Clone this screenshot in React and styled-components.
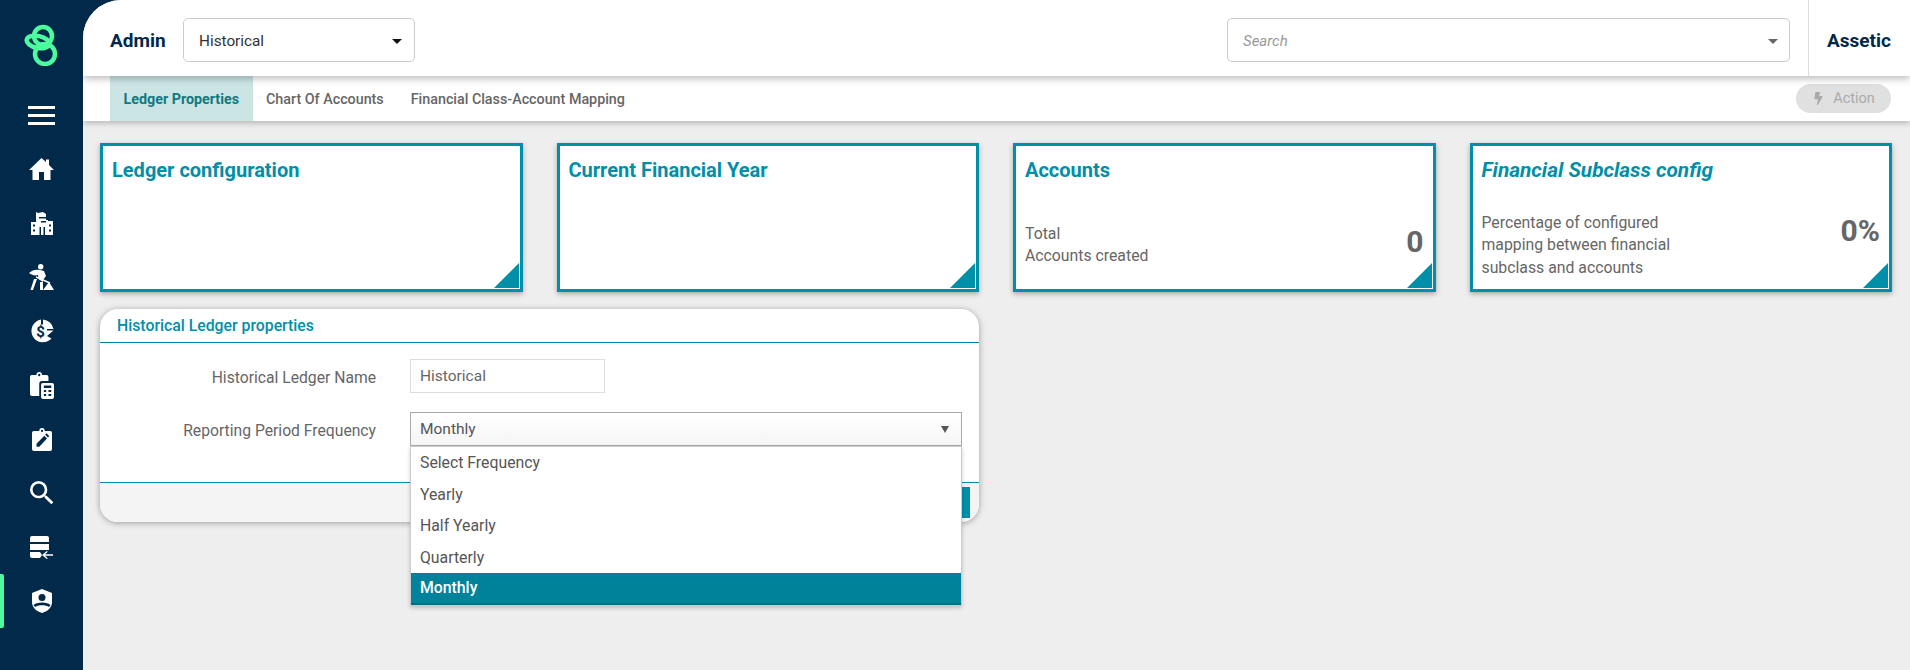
import React from "react";
import styled, { createGlobalStyle } from "styled-components";
import { FaBolt } from "react-icons/fa";
import { MdSearch } from "react-icons/md";

const navy = "#012a4a";
const teal = "#008fa8";

const GlobalStyle = createGlobalStyle`
  html, body { margin: 0; padding: 0; height: 100%; overflow: hidden; }
  body { font-family: Roboto, "Liberation Sans", sans-serif; background: ${navy}; }
  * { box-sizing: border-box; }
`;

const Logo = () => (
  <svg width="36" height="42" viewBox="0 0 36 42" fill="none" stroke="#4dfc9f" strokeWidth="4.500">
    <circle cx="19" cy="12" r="9" />
    <circle cx="21" cy="30" r="10" />
    <ellipse cx="14" cy="18" rx="11.500" ry="6" transform="rotate(12 14 18)" />
  </svg>
);

const HomeIcon = () => (
  <svg width="25" height="22" viewBox="0 0 25 22" fill="#fff">
    <path d="M12.500 0L17 4V1.500h3V7l5 5h-3.500v10H15v-8h-5v8H3.500V12H0z" />
  </svg>
);

const BuildingIcon = () => (
  <svg width="22" height="23" viewBox="0 0 22 23" fill="#fff">
    <path fillRule="evenodd" d="M0 23V10h5V0l2 1 5-1 3 2v6h2v1h5v14H0zM2 12.500v2h2v-2H2zm0 5v2h2v-2H2zm16-5v2h2v-2h-2zm0 5v2h2v-2h-2zM8 5v1.500h7V5H8zm2 4v1.500h5V9h-5zM8.500 15v8H10v-8H8.500zm4 0v8H14v-8h-1.500z" />
  </svg>
);

const DiggingIcon = () => (
  <svg width="25" height="26" viewBox="0 0 25 26" fill="#fff">
    <circle cx="11.700" cy="2.800" r="2.700" />
    <path d="M0 9c3-3 7-4 11-3l4 1 2 5-3 4v2l-4.500-3-.5-4c-3 1-6 0-9-2z" />
    <path d="M5 15h3L4 26H1.500zM11 18h3v8h-3z" />
    <path d="M7 13l14 6" stroke="#fff" strokeWidth="1.500" />
    <path d="M14 26l6-8 5 8z" />
  </svg>
);

const DollarIcon = () => (
  <svg width="24" height="24" viewBox="0 0 24 24">
    <path fill="#fff" d="M11 0.500v5h2v-5a11.500 11.500 0 0 1 10.500 9.500H17v1.500h6.500L17 17l4.500 2.500A11.500 11.500 0 1 1 11 0.500z" />
    <text x="10.500" y="18" textAnchor="middle" fontFamily="Roboto, sans-serif" fontWeight="700" fontSize="15" fill={navy}>$</text>
  </svg>
);

const ClipCalcIcon = () => (
  <svg width="24" height="27" viewBox="0 0 26 27" preserveAspectRatio="none" fill="#fff">
    <path d="M2 3h5a3 3 0 0 1 6 0h5a2 2 0 0 1 2 2v4h-7a3 3 0 0 0-3 3v12H2a2 2 0 0 1-2-2V5a2 2 0 0 1 2-2z" />
    <circle cx="10" cy="3" r="1.200" fill={navy} />
    <path fillRule="evenodd" d="M14 11h10a2 2 0 0 1 2 2v12a2 2 0 0 1-2 2H14a2 2 0 0 1-2-2V13a2 2 0 0 1 2-2zm1 2.500V16h8v-2.500h-8zm0 4.500v2h2.500v-2H15zm5 0v2h3v-2h-3zm-5 4v2h2.500v-2H15zm5 0v2h3v-2h-3z" />
  </svg>
);

const ClipPenIcon = () => (
  <svg width="20" height="23" viewBox="0 0 22 24" preserveAspectRatio="none" fill="#fff">
    <path d="M2 3h6a3 3 0 0 1 6 0h6a2 2 0 0 1 2 2v17a2 2 0 0 1-2 2H2a2 2 0 0 1-2-2V5a2 2 0 0 1 2-2z" />
    <circle cx="11" cy="3" r="1.200" fill={navy} />
    <path fill={navy} d="M5 19.500v-3L13.500 8l3 3L8 19.500H5zM14.500 7l1.500-1.500 3 3L17.500 10l-3-3z" />
  </svg>
);

const ServerIcon = () => (
  <svg width="23" height="23" viewBox="0 0 23 23" fill="#fff">
    <path d="M2 0h15a2 2 0 0 1 2 2v4H0V2a2 2 0 0 1 2-2zM0 8h19v6H0zM0 16h10l2 3-2 3H2a2 2 0 0 1-2-2z" />
    <path d="M23 18.300v1.400h-8L17.800 22.300l-1 .700-4.800-4 4.800-4 1 .700L15 18.300z" />
  </svg>
);

const ShieldIcon = () => (
  <svg width="20" height="24" viewBox="0 0 20 24" fill="#fff">
    <path d="M10 0l10 4v9c0 6-5 9.500-10 11C5 22.500 0 19 0 13V4z" />
    <circle cx="10" cy="8.500" r="3.500" fill={navy} />
    <path fill={navy} d="M1.500 16C4 12.500 16 12.500 18.500 16L17 18c-3-2.500-11-2.500-14 0z" />
  </svg>
);

function Burger() {
  return <BurgerBars><i /><i /><i /></BurgerBars>;
}

const navIcons = [
  <Burger key="menu" />,
  <HomeIcon key="home" />,
  <BuildingIcon key="building" />,
  <DiggingIcon key="dig" />,
  <DollarIcon key="dollar" />,
  <ClipCalcIcon key="calc" />,
  <ClipPenIcon key="pen" />,
  <MdSearch key="search" size={32} />,
  <ServerIcon key="server" />,
  <ShieldIcon key="shield" />,
];

const summaries = [
  { title: "Ledger configuration" },
  { title: "Current Financial Year" },
  { title: "Accounts", lines: ["Total", "Accounts created"], value: "0" },
  {
    title: "Financial Subclass config",
    italic: true,
    lines: ["Percentage of configured", "mapping between financial", "subclass and accounts"],
    value: "0%",
  },
];

const frequencies = ["Select Frequency", "Yearly", "Half Yearly", "Quarterly", "Monthly"];

export default function App() {
  return (
    <Page>
      <GlobalStyle />
      <Sidebar>
        <LogoBox><Logo /></LogoBox>
        {navIcons.map((icon, i) => (
          <NavItem key={i} $active={i === 9}>{icon}</NavItem>
        ))}
      </Sidebar>
      <Main>
        <TopBar>
          <ModuleName>Admin</ModuleName>
          <LedgerSelect>
            Historical
            <Caret />
          </LedgerSelect>
          <SearchBox>
            Search
            <Caret $muted />
          </SearchBox>
          <OrgName>Assetic</OrgName>
        </TopBar>
        <TabBar>
          <Tab $active>Ledger Properties</Tab>
          <Tab>Chart Of Accounts</Tab>
          <Tab>Financial Class-Account Mapping</Tab>
          <ActionButton><FaBolt size={13} />Action</ActionButton>
        </TabBar>
        <Content>
          {summaries.map((s) => (
            <Card key={s.title}>
              <CardTitle $italic={s.italic}>{s.title}</CardTitle>
              {s.lines && (
                <CardBody $tall={s.lines.length > 2}>
                  <CardText>
                    {s.lines.map((l) => <div key={l}>{l}</div>)}
                  </CardText>
                  <CardValue>{s.value}</CardValue>
                </CardBody>
              )}
              <CornerMark />
            </Card>
          ))}
          <Panel>
            <PanelHeader>Historical Ledger properties</PanelHeader>
            <PanelBody>
              <FormRow>
                <FieldLabel>Historical Ledger Name</FieldLabel>
                <TextField>Historical</TextField>
              </FormRow>
              <FormRow>
                <FieldLabel>Reporting Period Frequency</FieldLabel>
                <FrequencyBox>
                  <FrequencySelect>
                    Monthly
                    <SmallCaret />
                  </FrequencySelect>
                  <FrequencyMenu>
                    {frequencies.map((f) => (
                      <FrequencyOption key={f} $selected={f === "Monthly"}>{f}</FrequencyOption>
                    ))}
                  </FrequencyMenu>
                </FrequencyBox>
              </FormRow>
            </PanelBody>
            <PanelFooter>
              <SaveButton>Save</SaveButton>
            </PanelFooter>
          </Panel>
        </Content>
      </Main>
    </Page>
  );
}

const Page = styled.div`
  display: flex;
  height: 670px;
  background: ${navy};
`;

const Sidebar = styled.nav`
  flex: 0 0 83px;
  display: flex;
  flex-direction: column;
  color: #fff;
`;

const LogoBox = styled.div`
  height: 88px;
  display: flex;
  align-items: flex-start;
  justify-content: center;
  padding-top: 24px;
`;

const NavItem = styled.div`
  position: relative;
  height: 54px;
  display: flex;
  align-items: center;
  justify-content: center;
  ${(p) =>
    p.$active &&
    `&::before {
      content: "";
      position: absolute;
      left: 0;
      top: 0;
      bottom: 0;
      width: 4px;
      background: #4dfc9f;
      border-radius: 0 2px 2px 0;
    }`}
`;

const BurgerBars = styled.div`
  width: 27px;
  display: flex;
  flex-direction: column;
  gap: 5px;
  i {
    display: block;
    height: 3px;
    background: #fff;
  }
`;

const Main = styled.div`
  flex: 1;
  min-width: 0;
  background: #eee;
  border-top-left-radius: 38px;
  overflow: hidden;
`;

const TopBar = styled.header`
  position: relative;
  z-index: 2;
  height: 76px;
  background: #fff;
  display: flex;
  align-items: center;
  padding-left: 27px;
  box-shadow: 0 2px 8px rgba(0, 0, 0, 0.3);
`;

const ModuleName = styled.div`
  font-size: 19px;
  font-weight: 700;
  color: ${navy};
  width: 73px;
  margin-top: 4px;
`;

const LedgerSelect = styled.div`
  width: 232px;
  height: 44px;
  margin-top: 4px;
  border: 1px solid #ccc;
  border-radius: 5px;
  padding: 2px 13px 0 15px;
  display: flex;
  align-items: center;
  justify-content: space-between;
  font-size: 15.300px;
  color: #333;
`;

const Caret = styled.span`
  width: 0;
  height: 0;
  border-left: 5px solid transparent;
  border-right: 5px solid transparent;
  border-top: 5px solid ${(p) => (p.$muted ? "#666" : "#111")};
  margin-right: -1px;
`;

const SearchBox = styled.div`
  width: 563px;
  height: 44px;
  margin-left: auto;
  margin-top: 4px;
  border: 1px solid #ccc;
  border-radius: 5px;
  padding: 2px 12px 0 15px;
  display: flex;
  align-items: center;
  justify-content: space-between;
  font-size: 15px;
  font-style: italic;
  color: #999;
`;

const OrgName = styled.div`
  height: 100%;
  width: 102px;
  margin-left: 18px;
  border-left: 1px solid #ddd;
  padding: 4px 0 0 18px;
  display: flex;
  align-items: center;
  font-size: 19px;
  font-weight: 700;
  color: ${navy};
`;

const TabBar = styled.div`
  position: relative;
  z-index: 1;
  height: 45px;
  background: #fff;
  display: flex;
  padding-left: 27px;
  padding-right: 19px;
  box-shadow: 0 2px 6px rgba(0, 0, 0, 0.25);
`;

const Tab = styled.div`
  display: flex;
  align-items: center;
  padding: 0 13.500px;
  font-size: 14.300px;
  font-weight: ${(p) => (p.$active ? 700 : 500)};
  color: ${(p) => (p.$active ? "#0f7a80" : "#666")};
  background: ${(p) => (p.$active ? "#cbe5e5" : "transparent")};
`;

const ActionButton = styled.div`
  margin: 8px 0 8px auto;
  width: 95px;
  display: flex;
  align-items: center;
  justify-content: center;
  gap: 8px;
  border-radius: 15px;
  background: #e0e0e0;
  color: #aaa;
  font-size: 14.500px;
`;

const Content = styled.main`
  display: grid;
  grid-template-columns: repeat(4, 1fr);
  column-gap: 34px;
  row-gap: 17px;
  padding: 22px 18px 0 17px;
`;

const Card = styled.section`
  position: relative;
  height: 149px;
  background: #fff;
  border: 3px solid ${teal};
  box-shadow: 0 2px 5px rgba(0, 0, 0, 0.3);
  padding: 11px 9px;
`;

const CardTitle = styled.h3`
  margin: 0;
  font-size: ${(p) => (p.$italic ? "20.800px" : "20px")};
  line-height: 26px;
  font-weight: 700;
  font-style: ${(p) => (p.$italic ? "italic" : "normal")};
  color: ${teal};
`;

const CardBody = styled.div`
  display: flex;
  justify-content: space-between;
  align-items: flex-start;
  margin-top: ${(p) => (p.$tall ? "29px" : "40px")};
`;

const CardText = styled.div`
  font-size: 15.800px;
  line-height: 22.300px;
  color: #666;
`;

const CardValue = styled.div`
  font-size: 30px;
  font-weight: 700;
  color: #666;
  line-height: 32px;
  margin-top: 3px;
`;

const CornerMark = styled.span`
  position: absolute;
  right: 1px;
  bottom: 1px;
  width: 0;
  height: 0;
  border-style: solid;
  border-width: 0 0 25px 25px;
  border-color: transparent transparent ${teal} transparent;
`;

const Panel = styled.section`
  grid-column: 1 / span 2;
  height: 213px;
  background: #fff;
  border-radius: 18px;
  box-shadow: 0 1px 6px rgba(0, 0, 0, 0.35);
  display: flex;
  flex-direction: column;
`;

const PanelHeader = styled.div`
  height: 34px;
  padding: 0 17px;
  display: flex;
  align-items: center;
  font-size: 15.800px;
  font-weight: 500;
  color: ${teal};
  border-bottom: 1px solid #00829b;
`;

const PanelBody = styled.div`
  flex: 1;
  padding-top: 16px;
  display: flex;
  flex-direction: column;
  gap: 19px;
`;

const FormRow = styled.div`
  display: flex;
  align-items: center;
  gap: 34px;
  height: 34px;
`;

const FieldLabel = styled.label`
  width: 276px;
  padding-top: 2px;
  text-align: right;
  font-size: 15.700px;
  color: #666;
`;

const TextField = styled.div`
  width: 195px;
  height: 34px;
  border: 1px solid #ddd;
  padding: 0 9px;
  display: flex;
  align-items: center;
  font-size: 15.500px;
  color: #666;
`;

const FrequencyBox = styled.div`
  position: relative;
  width: 552px;
  height: 34px;
`;

const FrequencySelect = styled.div`
  height: 34px;
  border: 1px solid #aaa;
  background: linear-gradient(#fff, #f5f5f5);
  padding: 0 10px 0 9px;
  display: flex;
  align-items: center;
  justify-content: space-between;
  font-size: 15.500px;
  color: #555;
`;

const SmallCaret = styled.span`
  width: 0;
  height: 0;
  border-left: 4.500px solid transparent;
  border-right: 4.500px solid transparent;
  border-top: 7px solid #555;
  margin-right: 2px;
`;

const FrequencyMenu = styled.div`
  position: absolute;
  z-index: 3;
  left: 0;
  right: 0;
  top: 34px;
  background: #fff;
  border: 1px solid #ccc;
  box-shadow: 0 2px 4px rgba(0, 0, 0, 0.2);
`;

const FrequencyOption = styled.div`
  height: 31.500px;
  padding: 0 9px;
  display: flex;
  align-items: center;
  font-size: 15.800px;
  font-weight: ${(p) => (p.$selected ? 500 : 400)};
  color: ${(p) => (p.$selected ? "#fff" : "#555")};
  background: ${(p) => (p.$selected ? "#00829b" : "#fff")};
  ${(p) => p.$selected && "border-bottom: 2px solid #006f85;"}
`;

const PanelFooter = styled.div`
  height: 40px;
  background: #f4f4f4;
  border-top: 1px solid ${teal};
  border-radius: 0 0 18px 18px;
  padding: 4px 9px 4px 0;
  display: flex;
  justify-content: flex-end;
`;

const SaveButton = styled.div`
  width: 80px;
  background: ${teal};
  color: #fff;
  font-size: 15px;
  display: flex;
  align-items: center;
  justify-content: center;
`;
